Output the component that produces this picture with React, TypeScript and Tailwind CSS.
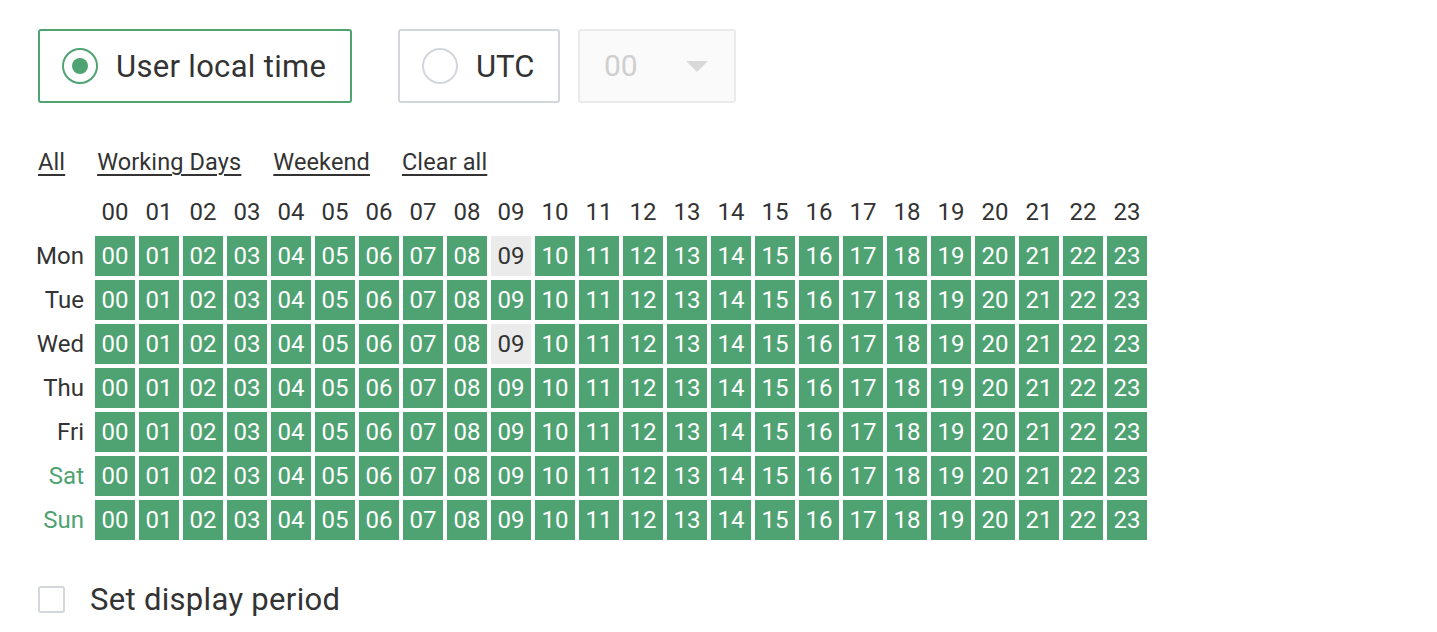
import { useState } from 'react'

const days = ['Mon', 'Tue', 'Wed', 'Thu', 'Fri', 'Sat', 'Sun']
const hours = Array.from({ length: 24 }, (_, i) => String(i).padStart(2, '0'))

// hours that are switched off, per day index
const off: Record<number, number[]> = { 0: [9], 2: [9] }

export default function App() {
  const [mode, setMode] = useState<'local' | 'utc'>('local')
  const [period, setPeriod] = useState(false)

  return (
    <div className="min-h-screen bg-white pl-[38px] pt-[29px] text-[#333]" style={{ fontFamily: 'Roboto, "Liberation Sans", sans-serif' }}>
      <div className="flex items-center">
        <button
          onClick={() => setMode('local')}
          className={`flex h-[74px] w-[314px] items-center rounded-[3px] border-2 pl-[22px] ${mode === 'local' ? 'border-[#4fa272]' : 'border-[#d3d6db]'}`}
        >
          <span className={`flex h-[36px] w-[36px] items-center justify-center rounded-full border-2 ${mode === 'local' ? 'border-[#4fa272]' : 'border-[#d3d6db]'}`}>
            {mode === 'local' && <span className="h-[16px] w-[16px] rounded-full bg-[#4fa272]" />}
          </span>
          <span className="ml-[18px] text-[31px] leading-none text-[#333] tracking-[0.01em]">User local time</span>
        </button>
        <button
          onClick={() => setMode('utc')}
          className={`ml-[46px] flex h-[74px] w-[162px] items-center rounded-[3px] border-2 pl-[22px] ${mode === 'utc' ? 'border-[#4fa272]' : 'border-[#d3d6db]'}`}
        >
          <span className={`flex h-[36px] w-[36px] items-center justify-center rounded-full border-2 ${mode === 'utc' ? 'border-[#4fa272]' : 'border-[#d3d6db]'}`}>
            {mode === 'utc' && <span className="h-[16px] w-[16px] rounded-full bg-[#4fa272]" />}
          </span>
          <span className="ml-[18px] text-[31px] leading-none text-[#333]">UTC</span>
        </button>
        <div className="ml-[18px] flex h-[74px] w-[158px] items-center rounded-[3px] border-2 border-[#ebebeb] bg-[#fafafa] pl-[24px]">
          <span className="text-[30px] leading-none text-[#cfcfcf]">00</span>
          <svg className="ml-[48px]" width="22" height="11" viewBox="0 0 22 11">
            <path d="M0 0 L22 0 L11 11 Z" fill="#d9d9d9" />
          </svg>
        </div>
      </div>

      <div className="mt-[44px] flex gap-[32px] text-[23.5px] leading-[30px] tracking-[0.005em]">
        {['All', 'Working Days', 'Weekend', 'Clear all'].map((l) => (
          <a key={l} className="cursor-pointer underline underline-offset-[4px] decoration-[1.5px]">{l}</a>
        ))}
      </div>

      <div className="mt-[15px] flex flex-col gap-[4px]">
        <div className="flex h-[40px] gap-[4px]">
          <div className="w-[53px]" />
          {hours.map((h) => (
            <div key={h} className="flex w-[40px] items-center justify-center text-[24px]">{h}</div>
          ))}
        </div>
        {days.map((d, di) => (
          <div key={d} className="flex h-[40px] gap-[4px]">
            <div className={`flex w-[53px] items-center justify-end pr-[7px] text-[24px] ${di >= 5 ? 'text-[#4fa272]' : 'text-[#333]'}`}>{d}</div>
            {hours.map((h, hi) => {
              const isOff = off[di]?.includes(hi)
              return (
                <div
                  key={h}
                  className={`flex w-[40px] items-center justify-center text-[24px] ${isOff ? 'bg-[#ebebeb] text-[#333]' : 'bg-[#4fa272] text-white'}`}
                >
                  {h}
                </div>
              )
            })}
          </div>
        ))}
      </div>

      <label className="mt-[44px] flex cursor-pointer items-center" onClick={() => setPeriod(!period)}>
        <span className={`h-[27px] w-[27px] rounded-[3px] border-2 ${period ? 'border-[#4fa272] bg-[#4fa272]' : 'border-[#d3d6db]'}`} />
        <span className="ml-[25px] text-[31px] leading-none tracking-[0.01em]">Set display period</span>
      </label>
    </div>
  )
}
